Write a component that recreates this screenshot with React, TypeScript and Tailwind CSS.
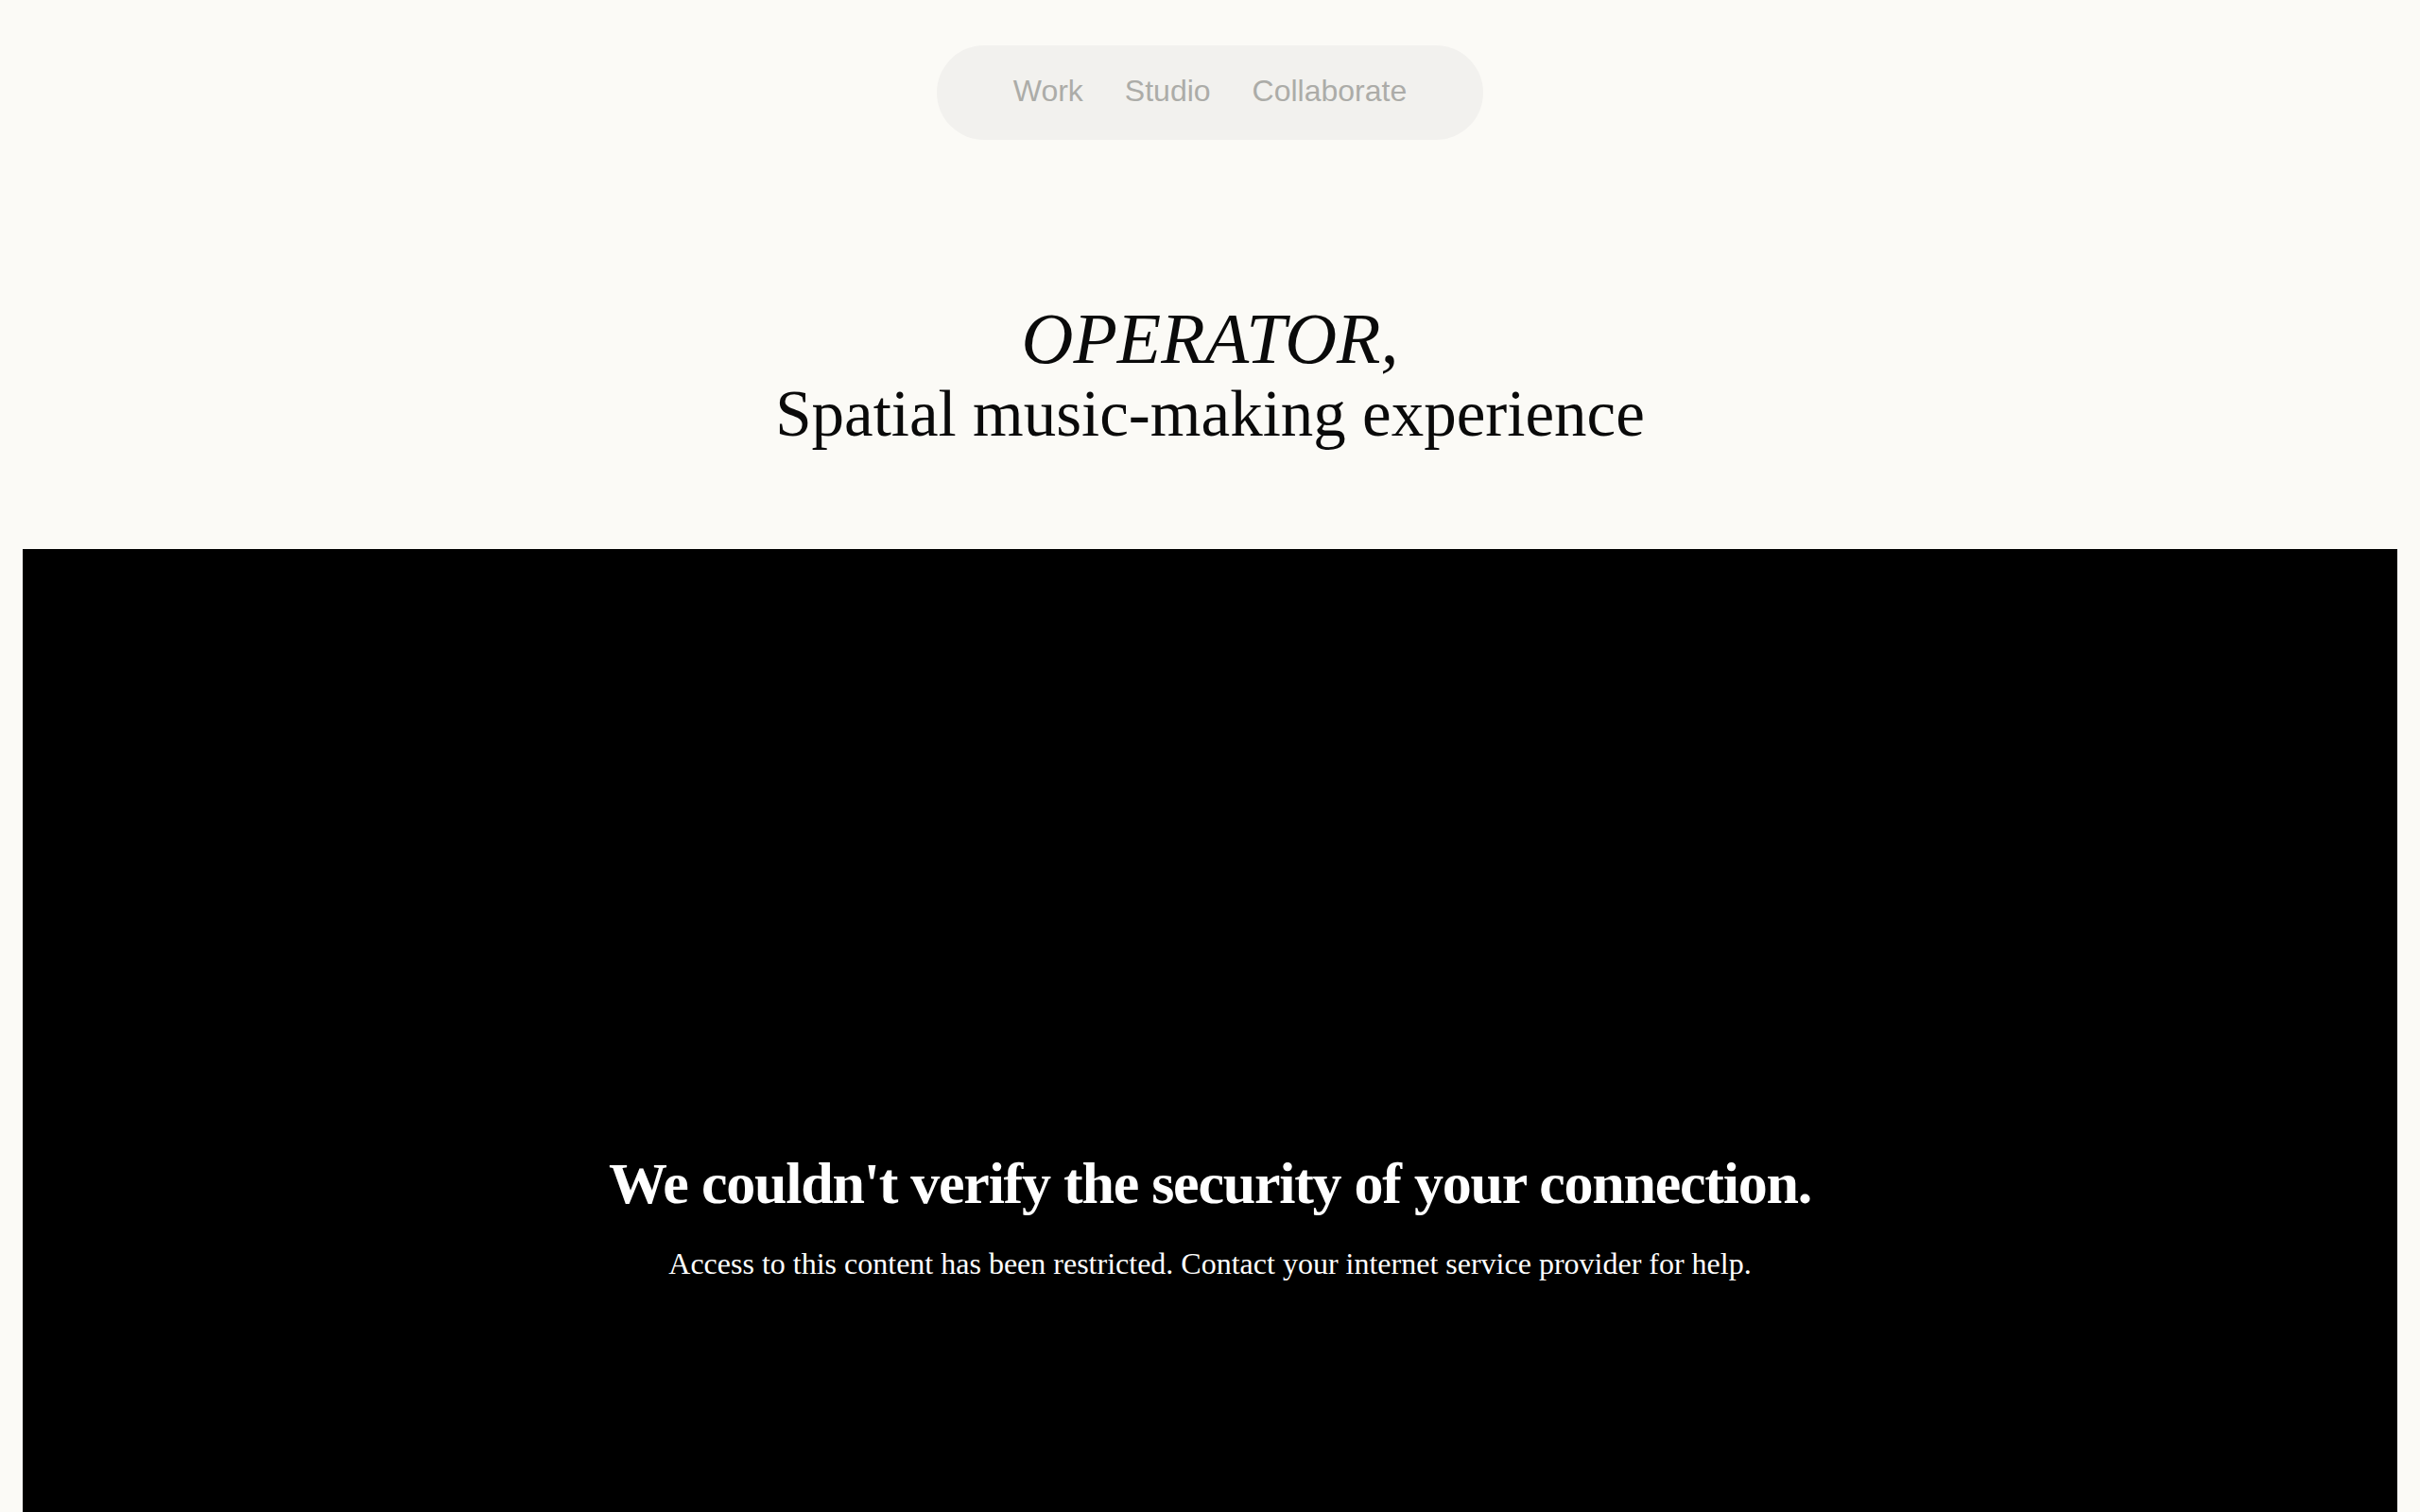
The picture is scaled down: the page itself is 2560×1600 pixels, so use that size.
const navItems = ['Work', 'Studio', 'Collaborate'];

export default function App() {
    return (
        <div className="flex h-screen w-full flex-col overflow-hidden bg-[#fbfaf6]">
            {/* Top nav pill */}
            <nav className="flex justify-center pt-[48px]">
                <div className="flex h-[100px] items-center gap-[44px] rounded-full bg-[#f2f1ee] px-[81px] pb-[5px] font-['Liberation_Sans',Arial,sans-serif] text-[32px] text-[#acaca8]">
                    {navItems.map((item) => (
                        <a key={item} href="#" className="leading-none">
                            {item}
                        </a>
                    ))}
                </div>
            </nav>

            {/* Title */}
            <header className="mt-[169px] flex flex-col items-center font-['Liberation_Serif','Times_New_Roman',serif] text-[#0a0a0a]">
                <h1 className="text-[76px] italic leading-[82px]">OPERATOR,</h1>
                <h2 className="text-[69px] leading-[78px]">Spatial music-making experience</h2>
            </header>

            {/* Embedded media block */}
            <section className="mx-[24px] mt-[104px] flex aspect-video shrink-0 flex-col items-center justify-center gap-[29px] bg-black font-['Liberation_Serif','Times_New_Roman',serif] text-white">
                <p className="mt-[-2px] text-[62px] font-bold leading-[72px] tracking-[-0.02em]">
                    We couldn't verify the security of your connection.
                </p>
                <p className="text-[32px] leading-[40px]">
                    Access to this content has been restricted. Contact your internet service provider for help.
                </p>
            </section>
        </div>
    );
}
